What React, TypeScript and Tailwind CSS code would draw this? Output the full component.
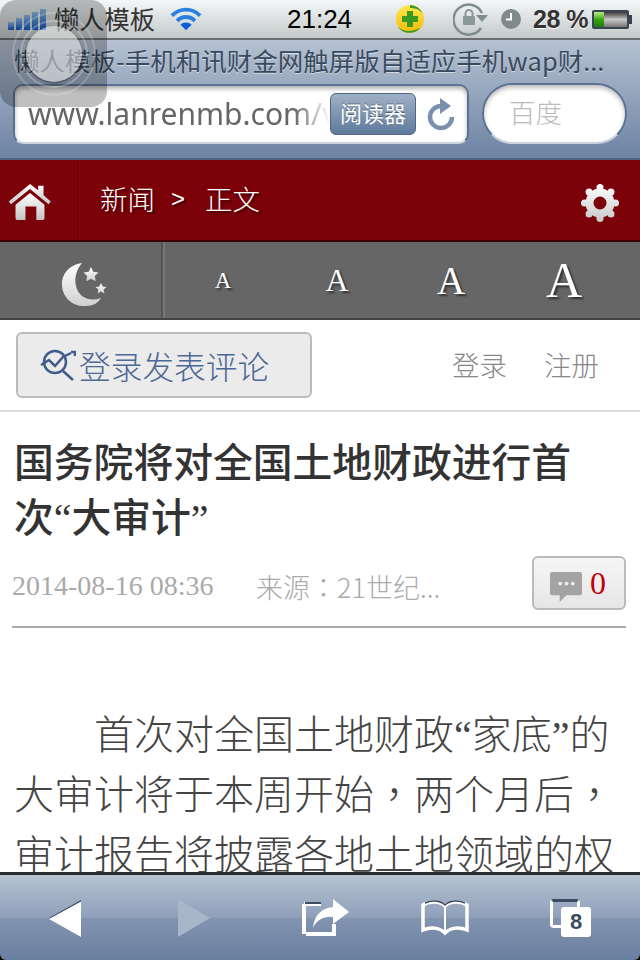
const cjk = "font-['Noto_Sans_CJK_SC','Noto_Sans',sans-serif]";
const quote = "font-['Liberation_Serif',serif] leading-[0]";
const tcPunct = "font-['Noto_Sans_CJK_TC',sans-serif] leading-[0]";

function SignalBars() {
  const bars = [8, 12, 15, 18, 21];
  return (
    <div className="flex items-end gap-[2px] h-[22px]">
      {bars.map((h) => (
        <div key={h} className="w-[6px] bg-gradient-to-b from-[#8fbce6] to-[#0f55c0]" style={{ height: h }} />
      ))}
    </div>
  );
}

function Wifi() {
  return (
    <svg width="32" height="26" viewBox="0 0 34 26" fill="none">
      <path d="M2 9.500C10.500 1 23.500 1 32 9.500" stroke="#2a7fe0" strokeWidth="4" />
      <path d="M7.500 15C13 9.500 21 9.500 26.500 15" stroke="#2a7fe0" strokeWidth="4" />
      <path d="M17 25l-6-6c3.300-3 8.700-3 12 0z" fill="#0d5fd8" />
    </svg>
  );
}

function Badge360() {
  return (
    <svg width="30" height="30" viewBox="0 0 30 30">
      <defs>
        <linearGradient id="yel" x1="0" y1="0" x2="0" y2="1">
          <stop offset="0" stopColor="#ffe94a" />
          <stop offset="1" stopColor="#f5b90c" />
        </linearGradient>
      </defs>
      <circle cx="15" cy="15" r="14" fill="url(#yel)" />
      <path d="M15 1a14 14 0 0 1 13 9c-3-4-7-6-13-6zM3 23c4 4 12 6 22 1-4 6-17 7-22-1z" fill="#3c9a2c" />
      <path d="M12 7h6v5h5v6h-5v5h-6v-5H7v-6h5z" fill="#3a9a20" />
    </svg>
  );
}

function RotationLock() {
  return (
    <svg width="36" height="34" viewBox="0 0 36 34" fill="none">
      <path d="M28 26a15 15 0 1 1 1-15" stroke="#7d8d8d" strokeWidth="2.500" />
      <path d="M23 13h12l-6 7z" fill="#7d8d8d" />
      <rect x="10" y="14" width="12" height="9" rx="1" fill="#8a9898" />
      <path d="M12.500 14v-2.500a3.500 3.500 0 0 1 7 0V14" stroke="#8a9898" strokeWidth="2" />
    </svg>
  );
}

function Clock() {
  return (
    <svg width="22" height="22" viewBox="0 0 22 22">
      <circle cx="11" cy="11" r="10" fill="#7f8b8a" />
      <path d="M11 5v6.500H6" stroke="#fff" strokeWidth="2" fill="none" />
    </svg>
  );
}

function Battery() {
  return (
    <div className="flex items-center">
      <div className="w-[37px] h-[19px] border-2 border-[#3a4450] bg-gradient-to-b from-[#3c3c3c] via-[#c8c8c8] to-[#777] rounded-[2px] overflow-hidden">
        <div className="w-[10px] h-full bg-gradient-to-b from-[#b6ee7a] via-[#3aa40e] to-[#1c7a08]" />
      </div>
      <div className="w-[3px] h-[9px] bg-[#3a4450]" />
    </div>
  );
}

function StatusBar() {
  return (
    <div className="h-[40px] shrink-0 flex items-center bg-gradient-to-b from-[#f3f7f8] to-[#c4c9ca] border-b-2 border-[#6a6e70]">
      <div className="ml-[8px] w-[46px]"><SignalBars /></div>
      <span className={`${cjk} w-[116px] text-[25.250px] leading-none text-[#333]`}>懒人模板</span>
      <Wifi />
      <span className="ml-[85px] w-[76px] font-['Liberation_Sans',sans-serif] text-[26px] leading-none text-black">21:24</span>
      <div className="ml-[32px]"><Badge360 /></div>
      <div className="ml-[28px]"><RotationLock /></div>
      <div className="ml-[11px]"><Clock /></div>
      <span className="ml-[11px] w-[59px] font-['Liberation_Sans',sans-serif] text-[25px] leading-none font-bold tracking-[-0.500px] text-[#333] [text-shadow:0_1px_0_#fff]">28 %</span>
      <Battery />
    </div>
  );
}

function Reload() {
  return (
    <svg width="28" height="32" viewBox="0 0 28 32" fill="none">
      <path d="M14 8a11 11 0 1 0 11 11" stroke="#7a90ad" strokeWidth="4.500" />
      <path d="M13 0l11 8-11 8z" fill="#7a90ad" />
    </svg>
  );
}

function BrowserBar() {
  return (
    <div className="h-[120px] shrink-0 flex flex-col bg-gradient-to-b from-[#b6c2d2] to-[#6d83a3] border-b-[2px] border-[#4c6280]">
      <div className={`${cjk} h-[43px] pl-[14px] text-[25.500px] leading-[40px] whitespace-nowrap text-[#3a4a5e] [text-shadow:0_1px_0_rgba(255,255,255,0.55)]`}>
        懒人模板-手机和讯财金网触屏版自适应手机wap财...
      </div>
      <div className="flex items-center pl-[13px]">
        <div className="w-[456px] h-[60px] flex items-center bg-white rounded-[10px] border-2 border-[#5b7292] border-b-[#c9d2dd] shadow-[inset_0_3px_4px_rgba(0,0,0,0.3)]">
          <span className="ml-[13px] w-[302px] overflow-hidden whitespace-nowrap font-['Noto_Sans',sans-serif] text-[30px] leading-none text-[#666] [mask-image:linear-gradient(to_right,#000_88%,transparent_100%)]">
            www.lanrenmb.com/v
          </span>
          <div className={`${cjk} w-[86px] h-[42px] pb-[3px] flex items-center justify-center rounded-[6px] border border-[#4e6787] bg-gradient-to-b from-[#a0b1c6] to-[#5f7a9c] text-[22px] leading-none text-white [text-shadow:0_-1px_0_rgba(0,0,0,0.35)]`}>
            阅读器
          </div>
          <div className="ml-[11px]"><Reload /></div>
        </div>
        <div className={`${cjk} ml-[13px] w-[145px] h-[61px] flex items-center pl-[25px] pb-[3px] bg-white rounded-full border-2 border-[#5b7292] border-b-[#c9d2dd] shadow-[inset_0_3px_4px_rgba(0,0,0,0.25)] text-[26.500px] leading-none font-light text-[#bbb]`}>
          百度
        </div>
      </div>
    </div>
  );
}

function HomeIcon() {
  return (
    <svg width="46" height="38" viewBox="0 0 48 42">
      <defs>
        <linearGradient id="hm" x1="0" y1="0" x2="0" y2="1">
          <stop offset="0" stopColor="#fff" />
          <stop offset="1" stopColor="#c4c4c4" />
        </linearGradient>
      </defs>
      <path d="M24 1L33 8V3h6v10.500l8 7-2.500 3L24 6.500 3 23.500 .5 20.500z" fill="url(#hm)" />
      <path d="M24 11l16 13v15q0 2-2 2h-7V26H19v15h-9q-2 0-2-2V24z" fill="url(#hm)" />
    </svg>
  );
}

function GearIcon() {
  const teeth = [0, 45, 90, 135, 180, 225, 270, 315];
  return (
    <svg width="38" height="38" viewBox="0 0 38 38">
      <defs>
        <linearGradient id="gr" gradientUnits="userSpaceOnUse" x1="0" y1="0" x2="0" y2="38">
          <stop offset="0" stopColor="#fff" />
          <stop offset="1" stopColor="#c8c8c8" />
        </linearGradient>
      </defs>
      {teeth.map((a) => {
        const r = (a * Math.PI) / 180;
        return <circle key={a} cx={19 + Math.sin(r) * 15.5} cy={19 - Math.cos(r) * 15.5} r="3.500" fill="url(#gr)" />;
      })}
      <circle cx="19" cy="19" r="10.500" fill="none" stroke="url(#gr)" strokeWidth="8" />
    </svg>
  );
}

function RedBar() {
  return (
    <div className="h-[82px] shrink-0 flex items-center bg-[#7a0208] border-b-2 border-[#3d0205]">
      <div className="w-[78px] h-full flex items-center justify-center">
        <div className="-ml-[18px] mt-[3px]"><HomeIcon /></div>
      </div>
      <div className="w-[2px] h-full bg-gradient-to-r from-[#5a0005] to-[#950a10]" />
      <div className={`${cjk} ml-[20px] -mt-[3px] flex-1 flex items-center text-[27.500px] leading-none font-light text-white [text-shadow:2px_2px_2px_rgba(0,0,0,0.5)]`}>
        <span>新闻</span>
        <span className="ml-[16px] font-['Liberation_Sans',sans-serif] text-[24px]">&gt;</span>
        <span className="ml-[20px]">正文</span>
      </div>
      <div className="mr-[21px] mt-[6px]"><GearIcon /></div>
    </div>
  );
}

function MoonIcon() {
  return (
    <svg width="50" height="46" viewBox="0 0 50 46">
      <defs>
        <linearGradient id="mn" x1="0" y1="0" x2="0" y2="1">
          <stop offset="0" stopColor="#fff" />
          <stop offset="1" stopColor="#d0d0d0" />
        </linearGradient>
      </defs>
      <path d="M22 1C8 3 1 13 2 24c1 12 11 21 24 20 7 0 12-3 15-8-11 4-22 0-25-12-2-9 1-17 6-23z" fill="url(#mn)" />
      <path d="M31 5l2.300 4.700 5.200.8-3.700 3.600.9 5.200-4.700-2.500-4.700 2.500.9-5.200-3.700-3.600 5.200-.8z" fill="url(#mn)" />
      <path d="M41 21l1.700 3.400 3.800.6-2.800 2.600.7 3.800-3.400-1.800-3.400 1.800.7-3.800-2.800-2.600 3.800-.6z" fill="url(#mn)" />
    </svg>
  );
}

function FontBar() {
  const sizes = [
    { cls: "w-[116px] text-[23px]", label: "small" },
    { cls: "w-[112px] text-[32px]", label: "medium" },
    { cls: "w-[116px] text-[39px]", label: "large" },
    { cls: "w-[110px] text-[50px]", label: "xlarge" },
  ];
  return (
    <div className="h-[78px] shrink-0 flex items-stretch bg-[#666] border-b-2 border-[#444]">
      <div className="w-[163px] flex items-center justify-center border-r-[2px] border-[#555]">
        <div className="mt-[10px] ml-[8px]"><MoonIcon /></div>
      </div>
      <div className="w-[2px] bg-[#777]" />
      {sizes.map((s) => (
        <div key={s.label} className={`${s.cls} flex items-center justify-center font-['Liberation_Serif',serif] leading-none text-white [text-shadow:2px_2px_2px_rgba(0,0,0,0.55)]`}>
          A
        </div>
      ))}
    </div>
  );
}

function ChartSearch() {
  return (
    <svg width="36" height="34" viewBox="0 0 36 34" fill="none" stroke="#3f5c8c" strokeWidth="2.500">
      <circle cx="15" cy="14" r="11" />
      <path d="M1 17l8-5 6 6 8-9 8-4M31 4h4v4M23 23l10 9" />
    </svg>
  );
}

function LoginRow() {
  return (
    <div className={`${cjk} h-[92px] shrink-0 flex items-center justify-between pl-[16px] pr-[41px] bg-white border-b-2 border-[#ddd]`}>
      <div className="w-[296px] h-[66px] flex items-center pl-[22px] bg-[#ebebeb] border-2 border-[#bbb] rounded-[6px]">
        <ChartSearch />
        <span className="ml-[3px] mt-[2px] text-[31.700px] leading-none font-light text-[#4d6796]">登录发表评论</span>
      </div>
      <div className="flex gap-[37px] text-[27.500px] leading-none font-light text-[#888]">
        <span>登录</span>
        <span>注册</span>
      </div>
    </div>
  );
}

function CommentIcon() {
  return (
    <svg width="32" height="30" viewBox="0 0 33 31">
      <path d="M2 0h29q2 0 2 2v20q0 2-2 2H17l-7 7v-7H2q-2 0-2-2V2q0-2 2-2z" fill="#a3a3a3" />
      <circle cx="10.500" cy="12" r="2" fill="#eee" />
      <circle cx="17" cy="12" r="2" fill="#eee" />
      <circle cx="23.500" cy="12" r="2" fill="#eee" />
    </svg>
  );
}

function Article() {
  return (
    <div className="flex-1 min-h-0 overflow-hidden bg-white">
      <h1 className={`${cjk} pt-[20px] pl-[14px] pr-[50px] text-[39.800px] leading-[55px] font-medium text-[#333]`}>
        国务院将对全国土地财政进行首次<span className={quote}>“</span>大审计<span className={quote}>”</span>
      </h1>
      <div className="ml-[12px] mr-[14px] h-[86px] flex items-center border-b-2 border-[#aaa] pb-[2px]">
        <span className="mt-[6px] w-[244px] font-['Liberation_Serif',serif] text-[28px] leading-none text-[#aaa]">2014-08-16 08:36</span>
        <span className={`${cjk} mt-[6px] flex-1 text-[27px] leading-none font-light text-[#aaa] whitespace-nowrap`}>来源<span className={tcPunct}>：</span>21世纪...</span>
        <div className="w-[94px] h-[54px] flex items-center justify-center gap-[8px] bg-gradient-to-b from-[#f6f6f6] to-[#e6e6e6] border-2 border-[#bbb] rounded-[6px]">
          <div className="mt-[7px] -ml-[2px]"><CommentIcon /></div>
          <span className="font-['Liberation_Serif',serif] text-[32px] leading-none text-[#c0000c]">0</span>
        </div>
      </div>
      <p className={`${cjk} mt-[74px] pl-[14px] pr-[12px] text-[40px] leading-[60px] indent-[80px] font-light text-[#444]`}>
        首次对全国土地财政<span className={quote}>“</span>家底<span className={quote}>”</span>的大审计将于本周开始<span className={tcPunct}>，</span>两个月后<span className={tcPunct}>，</span>审计报告将披露各地土地领域的权属情况和收支状况
      </p>
    </div>
  );
}

function BottomBar() {
  return (
    <div className="h-[88px] shrink-0 flex items-center border-t-[3px] border-[#2a2e33] rounded-b-[6px] bg-[linear-gradient(to_bottom,#b7c3d2_0%,#8f9fba_50%,#8294b0_51%,#697f9f_100%)]">
      <svg className="ml-[49px]" width="32" height="40" viewBox="0 0 32 40">
        <path d="M32 2L0 20l32 19z" fill="#3c4c60" />
        <path d="M32 3.500L0 21l32 18z" fill="#fff" />
      </svg>
      <svg className="ml-[97px]" width="32" height="40" viewBox="0 0 32 40">
        <path d="M0 1l32 19L0 39z" fill="#a8b6ca" />
      </svg>
      <svg className="ml-[92px]" width="48" height="40" viewBox="0 0 48 40" fill="none">
        <path d="M2 6h17M4 36h28v-10" stroke="#fff" strokeWidth="4" />
        <path d="M2 6v30" stroke="#fff" strokeWidth="4" />
        <path d="M3 5h16" stroke="#3c4c60" strokeWidth="2" />
        <path d="M31 1l16 13-16 12v-7C21 18 15 22 11 30c1-12 8-20 20-21z" fill="#fff" />
      </svg>
      <svg className="ml-[70px]" width="50" height="36" viewBox="0 0 50 36" fill="none">
        <path d="M3 5c6-4 17-4 22 1 5-5 16-5 22-1v25c-7-3-16-3-22 3-6-6-15-6-22-3z" stroke="#fff" strokeWidth="3.500" />
        <path d="M25 6v27" stroke="#fff" strokeWidth="2" />
        <path d="M5 3c6-3 15-3 20 2 5-5 14-5 20-2" stroke="#3c4c60" strokeWidth="1.500" />
      </svg>
      <div className="ml-[80px] w-[41px] h-[38px] relative">
        <div className="w-[30px] h-[29px] border-[3px] border-white border-t-[#3c4c60] rounded-[4px]" />
        <div className="absolute right-0 bottom-0 w-[30px] h-[30px] bg-white rounded-[3px] flex items-center justify-center font-['Liberation_Sans',sans-serif] font-bold text-[22px] leading-none text-[#3c4c60]">
          8
        </div>
      </div>
    </div>
  );
}

function AssistiveTouch() {
  return (
    <div className="absolute left-0 top-0 w-[107px] h-[107px] rounded-[16px] bg-black/25 flex items-center justify-center">
      <div className="w-[84px] h-[84px] rounded-full border-[2px] border-white/20 flex items-center justify-center">
        <div className="w-[68px] h-[68px] rounded-full border-[2px] border-white/25 flex items-center justify-center">
          <div className="w-[56px] h-[56px] rounded-full bg-white/50 shadow-[0_1px_2px_rgba(0,0,0,0.5)]" />
        </div>
      </div>
    </div>
  );
}

export default function App() {
  return (
    <div className="relative w-[640px] h-[960px] overflow-hidden bg-black flex flex-col">
      <StatusBar />
      <BrowserBar />
      <RedBar />
      <FontBar />
      <LoginRow />
      <Article />
      <BottomBar />
      <AssistiveTouch />
    </div>
  );
}
